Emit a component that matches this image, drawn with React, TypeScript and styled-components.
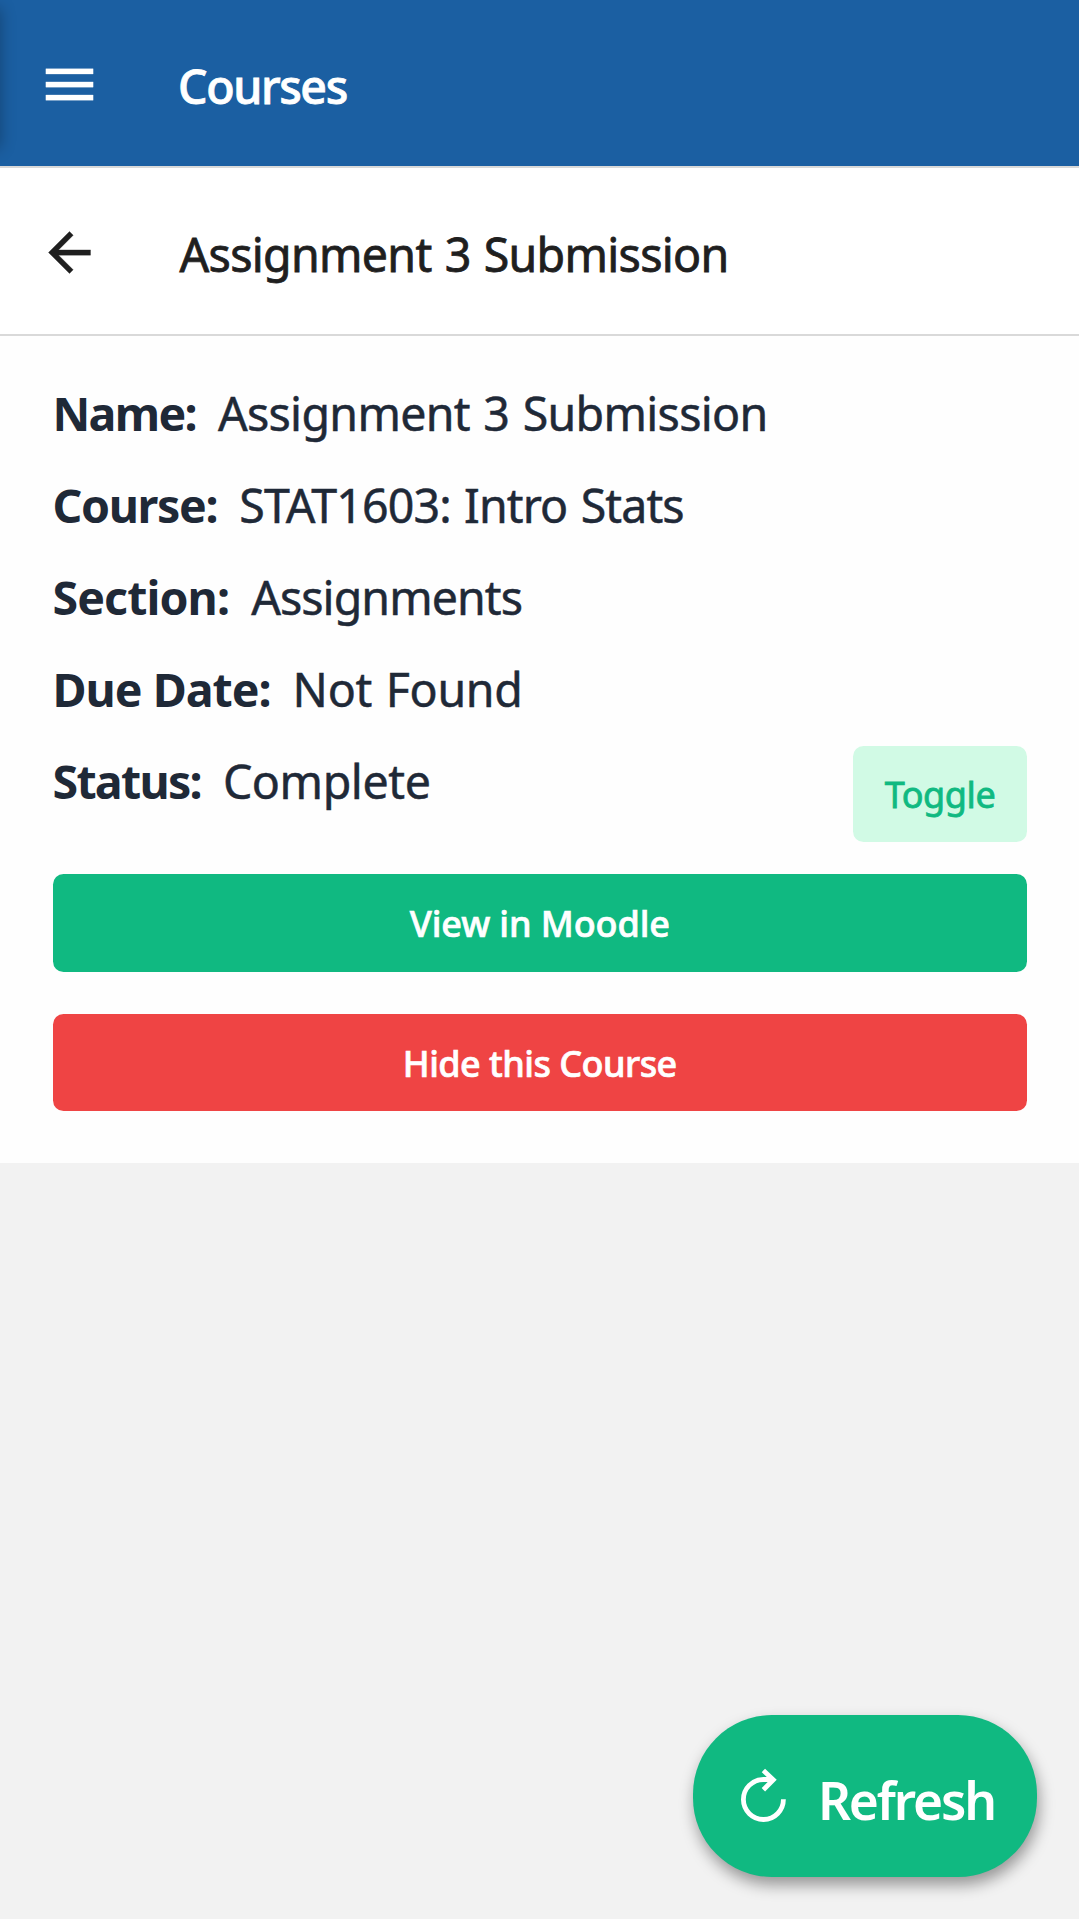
import React from "react";
import styled, { createGlobalStyle } from "styled-components";

const GlobalStyle = createGlobalStyle`
  *, *::before, *::after { box-sizing: border-box; }
  html, body, #root { height: 100%; margin: 0; }
  body {
    background: #f2f2f2;
    color: #1f2937;
    font-family: "Segoe UI", "Noto Sans", "Open Sans", sans-serif;
    overflow: hidden;
  }
`;

const Screen = styled.div`
  position: relative;
  display: flex;
  flex-direction: column;
  width: 100%;
  height: 1919px;
  overflow: hidden;
`;

const Bar = styled.header<{ $primary?: boolean }>`
  display: flex;
  align-items: center;
  height: 168px;
  padding: 2px 37.5px 0;
  gap: ${(p) => (p.$primary ? 77.5 : 79)}px;
  border-bottom: 2px solid #d9d9d9;
  background: ${(p) => (p.$primary ? "#1b5fa2" : "#ffffff")};
  color: ${(p) => (p.$primary ? "#ffffff" : "#1f1f1f")};
`;

const IconButton = styled.button`
  display: flex;
  width: 63px;
  height: 63px;
  padding: 0;
  border: 0;
  background: none;
  color: inherit;

  svg {
    width: 100%;
    height: 100%;
    fill: currentColor;
    stroke: currentColor;
    stroke-width: 0.12;
  }
`;

const Title = styled.h1<{ $strong?: boolean }>`
  margin: 4px 0 0;
  font-size: 46.5px;
  line-height: 63px;
  font-weight: ${(p) => (p.$strong ? 500 : 400)};
  letter-spacing: ${(p) => (p.$strong ? -1.4 : -0.68)}px;
  word-spacing: 1.7px;
  -webkit-text-stroke: ${(p) => (p.$strong ? 0.8 : 0.8)}px currentColor;
`;

const DrawerEdge = styled.div`
  position: absolute;
  top: 8px;
  left: -20px;
  width: 20px;
  height: 140px;
  box-shadow: 0 0 16px rgba(0, 0, 0, 0.3);
`;

const Details = styled.main`
  display: flex;
  flex-direction: column;
  height: 827px;
  padding: 31px 52px 0 52.5px;
  background: #fefefe;
`;

const Field = styled.div`
  display: flex;
  height: 92px;
  font-size: 46.5px;
  line-height: 92px;
  white-space: nowrap;
`;

const Label = styled.span<{ $tracking: number }>`
  font-weight: 700;
  letter-spacing: ${(p) => p.$tracking}px;
`;

const Value = styled.span<{ $tracking: number }>`
  margin-left: 22px;
  letter-spacing: ${(p) => p.$tracking}px;
  word-spacing: 2px;
  -webkit-text-stroke: 0.5px currentColor;
`;

const ToggleButton = styled.button`
  width: 174px;
  height: 96.3px;
  margin: 10.6px 0 0 auto;
  padding: 3px 0 0;
  border: 0;
  border-radius: 10.5px;
  background: #d1fae5;
  color: #10b981;
  font: inherit;
  font-size: 36px;
  line-height: 48px;
  letter-spacing: -0.41px;
  -webkit-text-stroke: 0.8px currentColor;
`;

const Action = styled.button<{ $danger?: boolean }>`
  flex: none;
  height: ${(p) => (p.$danger ? 96.8 : 98.8)}px;
  margin-top: ${(p) => (p.$danger ? 41.9 : 46.6)}px;
  padding: 2.5px 0 0;
  border: 0;
  border-radius: 10.5px;
  background: ${(p) => (p.$danger ? "#ef4444" : "#10b981")};
  color: #ffffff;
  font: inherit;
  font-size: 36px;
  font-weight: 500;
  line-height: 48px;
  letter-spacing: ${(p) => (p.$danger ? -0.55 : -0.1)}px;
  -webkit-text-stroke: 0.7px currentColor;
`;

const RefreshButton = styled.button`
  position: absolute;
  right: 41.6px;
  bottom: 41.8px;
  display: flex;
  align-items: center;
  gap: 28px;
  width: 344.5px;
  height: 161.8px;
  padding: 0 0 0 44px;
  border: 0;
  border-radius: 79px;
  background: #10b981;
  box-shadow: 2px 8px 15px rgba(0, 0, 0, 0.38);
  color: #ffffff;
  font: inherit;

  svg {
    flex: none;
    width: 52px;
    height: 60px;
  }
`;

const RefreshLabel = styled.span`
  margin-top: 7px;
  margin-left: 1px;
  font-size: 51.5px;
  font-weight: 600;
  line-height: 70px;
  letter-spacing: -2.15px;
`;

const fields = [
  { label: "Name:", value: "Assignment 3 Submission", lt: -1.69, vt: -0.68 },
  { label: "Course:", value: "STAT1603: Intro Stats", lt: -1.34, vt: -0.86 },
  { label: "Section:", value: "Assignments", lt: -0.9, vt: -0.93 },
  { label: "Due Date:", value: "Not Found", lt: -0.99, vt: -0.3 },
  { label: "Status:", value: "Complete", lt: -1.73, vt: -0.4, toggle: true },
];

export default function App() {
  return (
    <Screen>
      <GlobalStyle />
      <Bar $primary>
        <IconButton aria-label="Menu">
          <svg viewBox="0 0 24 24">
            <path d="M3 18h18v-2H3v2zm0-5h18v-2H3v2zm0-7v2h18V6H3z" />
          </svg>
        </IconButton>
        <Title $strong>Courses</Title>
      </Bar>
      <Bar>
        <IconButton aria-label="Back">
          <svg viewBox="0 0 24 24">
            <path d="M20 11H7.83l5.59-5.59L12 4l-8 8 8 8 1.41-1.41L7.83 13H20v-2z" />
          </svg>
        </IconButton>
        <Title>Assignment 3 Submission</Title>
      </Bar>
      <Details>
        {fields.map((f) => (
          <Field key={f.label}>
            <Label $tracking={f.lt}>{f.label}</Label>
            <Value $tracking={f.vt}>{f.value}</Value>
            {f.toggle && <ToggleButton>Toggle</ToggleButton>}
          </Field>
        ))}
        <Action>View in Moodle</Action>
        <Action $danger>Hide this Course</Action>
      </Details>
      <RefreshButton>
        <svg viewBox="737 1766.8 52 60" fill="none" stroke="currentColor" strokeWidth="4.8">
          <path d="M783.4 1800A20 20 0 1 1 763.4 1780.3H774" />
          <path d="M763.4 1771.2L773.3 1780.6L763.4 1790.6" />
        </svg>
        <RefreshLabel>Refresh</RefreshLabel>
      </RefreshButton>
      <DrawerEdge />
    </Screen>
  );
}
